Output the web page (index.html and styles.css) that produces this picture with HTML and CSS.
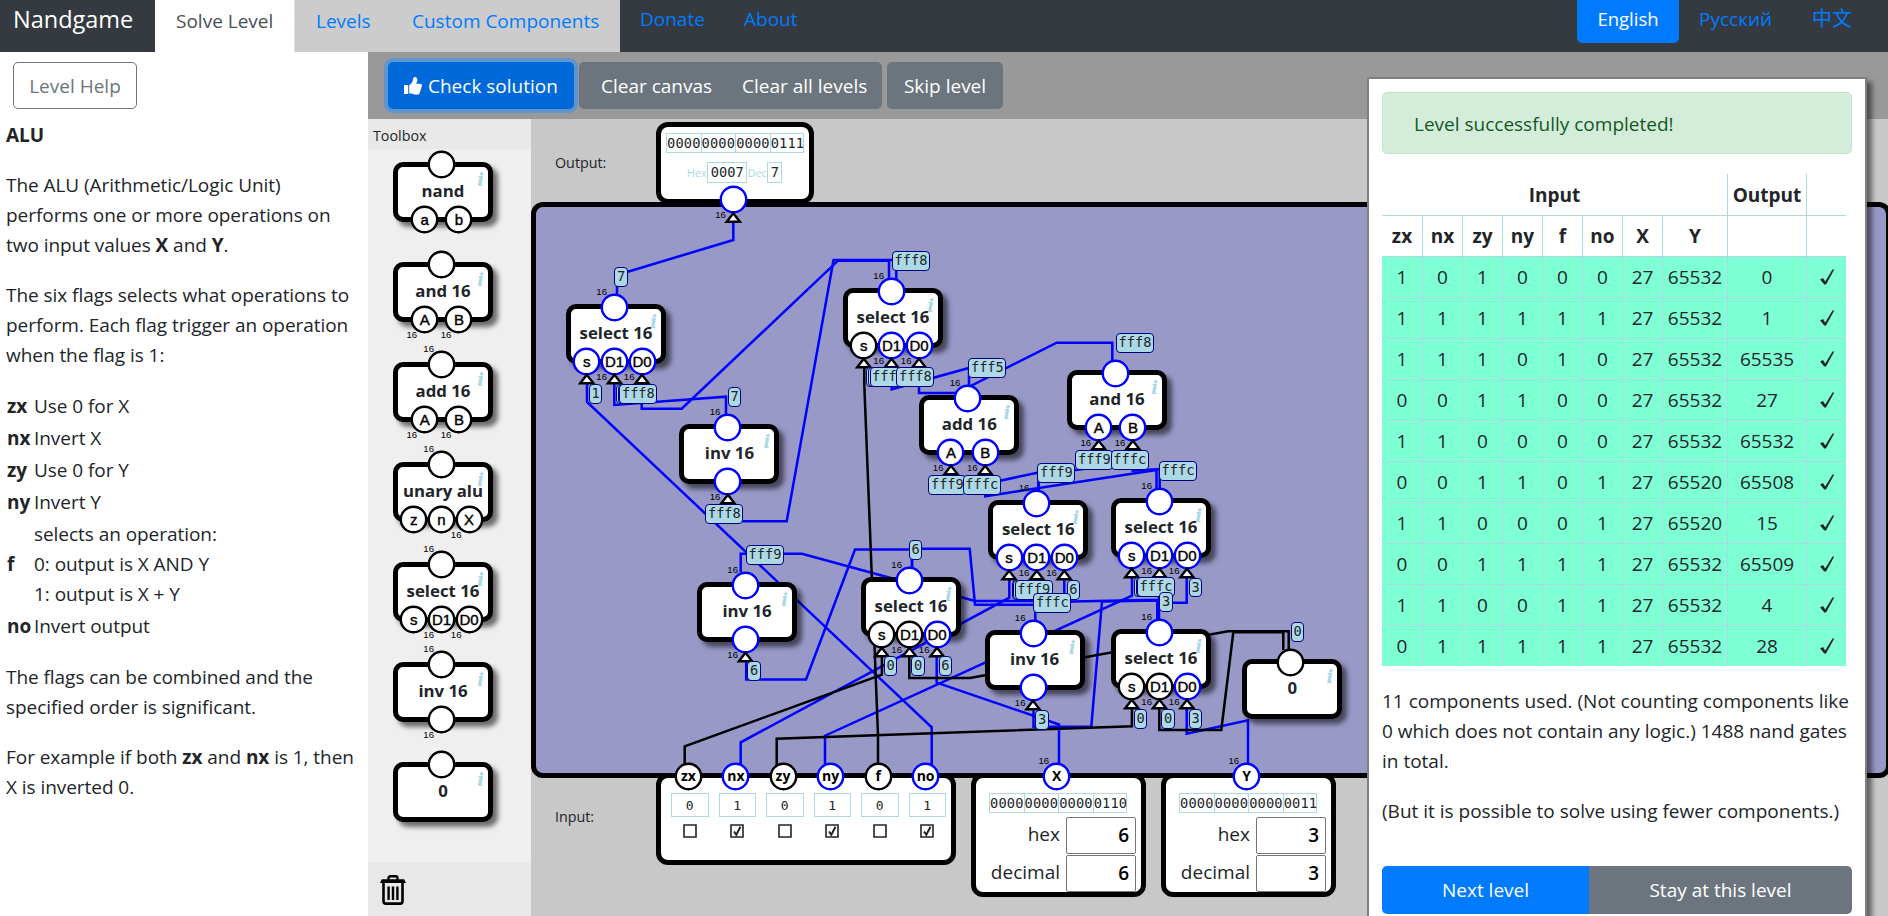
FILE: index.html
```html
<!DOCTYPE html>
<html lang="en">
<head>
<meta charset="utf-8">
<title>Nandgame</title>
<link rel="stylesheet" href="styles.css">
</head>
<body>
<header class="navbar">
  <a class="brand">Nandgame</a>
  <nav class="tabs">
    <a class="tab tab-active">Solve Level</a>
    <a class="tab">Levels</a>
    <a class="tab tab-wide">Custom Components</a>
  </nav>
  <a class="link link-donate">Donate</a>
  <a class="link link-about">About</a>
  <nav class="languages">
    <a class="lang lang-active">English</a>
    <a class="lang lang-ru">Русский</a>
    <a class="lang lang-zh">中文</a>
  </nav>
</header>

<div class="layout">
  <aside class="help">
    <button class="help-btn">Level Help</button>
    <h1>ALU</h1>
    <p>The ALU (Arithmetic/Logic Unit)<br>performs one or more operations on<br>two input values <b>X</b> and <b>Y</b>.</p>
    <p>The six flags selects what operations to<br>perform. Each flag trigger an operation<br>when the flag is 1:</p>
    <dl class="flags">
      <dt>zx</dt><dd>Use 0 for X</dd>
      <dt>nx</dt><dd>Invert X</dd>
      <dt>zy</dt><dd>Use 0 for Y</dd>
      <dt>ny</dt><dd>Invert Y</dd>
      <dt>f</dt><dd>selects an operation:<br>0: output is X AND Y<br>1: output is X + Y</dd>
      <dt>no</dt><dd>Invert output</dd>
    </dl>
    <p>The flags can be combined and the<br>specified order is significant.</p>
    <p>For example if both <b>zx</b> and <b>nx</b> is 1, then<br>X is inverted 0.</p>
  </aside>

  <main class="workspace">
    <div class="toolbar">
      <button class="btn btn-check">
        <svg class="thumb" viewBox="0 0 18 18"><path d="M0 8h4.2v9H0z"/><path d="M5.2 8.2C7.6 6.600 8.600 4.700 9 2.400 9.300.6 10 0 10.900 0c1.800 0 2.500 1.500 2.500 3.100 0 1.400-.8 2.300-1.200 3.700H16c1.200 0 2 .9 2 1.800 0 .8-.4 1.300-.8 1.600.3 1 0 2-.7 2.500.2 1-.1 1.800-.7 2.300.1 1.700-.9 2.700-3 2.700-3.400 0-4.400-1.400-7.600-1.500z"/></svg>
        <span>Check solution</span>
      </button>
      <div class="btn-group"><button class="btn">Clear canvas</button><button class="btn">Clear all levels</button></div>
      <button class="btn btn-skip">Skip level</button>
    </div>
    <div class="stage">
      <section class="toolbox">
        <h2>Toolbox</h2>
        <div class="tools" id="tools"></div>
        <footer class="trash">
          <svg viewBox="0 0 26 30"><g fill="none" stroke="#000"><path d="M8.500 5V3.200C8.500 2 9.200 1.300 10.400 1.300h5.200c1.200 0 1.900.7 1.900 1.900V5" stroke-width="2.400"/><path d="M3.500 8v18.200c0 1.500.9 2.400 2.400 2.400h14.200c1.500 0 2.400-.9 2.400-2.400V8" stroke-width="2.600"/><path d="M8.600 11.500V25M13 11.500V25M17.400 11.500V25" stroke-width="2.400"/></g><path d="M1.800 4.200h22.400L26 8H0z"/></svg>
        </footer>
      </section>
      <section class="canvas">
        <div class="plane">
          <span class="zone-label zone-output">Output:</span>
          <span class="zone-label zone-input">Input:</span>
          <div class="circuit"></div>
          <div class="card output-card">
            <div class="bits"><i>0000</i><i>0000</i><i>0000</i><i>0111</i></div>
            <div class="readout">Hex<code>0007</code>Dec<code>7</code></div>
          </div>
          <div class="card flags-card" id="flag-inputs"></div>
          <div class="card number-card card-x">
            <div class="bits"><i>0000</i><i>0000</i><i>0000</i><i>0110</i></div>
            <label>hex<span class="field">6</span></label>
            <label>decimal<span class="field">6</span></label>
          </div>
          <div class="card number-card card-y">
            <div class="bits"><i>0000</i><i>0000</i><i>0000</i><i>0011</i></div>
            <label>hex<span class="field">3</span></label>
            <label>decimal<span class="field">3</span></label>
          </div>
          <svg class="wires" id="wires" width="1888" height="916"></svg>
          <div id="nodes"></div>
          <svg class="wires" id="arrows" width="1888" height="916"></svg>
          <div id="tags"></div>
        </div>
      </section>
    </div>
  </main>
</div>

<section class="dialog">
  <div class="alert">Level successfully completed!</div>
  <table class="results">
    <colgroup><col class="c-first"><col class="c-bit"><col class="c-bit"><col class="c-bit"><col class="c-bit"><col class="c-bit"><col class="c-bit"><col class="c-y"><col class="c-out"><col class="c-ok"></colgroup>
    <thead>
      <tr><th colspan="8">Input</th><th>Output</th><th></th></tr>
      <tr><th>zx</th><th>nx</th><th>zy</th><th>ny</th><th>f</th><th>no</th><th>X</th><th>Y</th><th></th><th></th></tr>
    </thead>
    <tbody id="results"></tbody>
  </table>
  <p>11 components used. (Not counting components like<br>0 which does not contain any logic.) 1488 nand gates<br>in total.</p>
  <p>(But it is possible to solve using fewer components.)</p>
  <div class="actions"><button class="btn btn-next">Next level</button><button class="btn btn-stay">Stay at this level</button></div>
</section>
<script src="app.js"></script>
</body>
</html>
```

FILE: styles.css
```css
* { box-sizing: border-box; }
html { height: 100%; overflow: hidden; background: #fff; }
body {
  margin: 0;
  height: 916px;
  overflow: hidden;
  position: relative;
  display: flex;
  flex-direction: column;
  background: #fff;
  color: #212529;
  font: 19px/30px "Open Sans", "Noto Sans CJK SC", sans-serif;
}
button { font: inherit; padding: 0; margin: 0; }
p { margin: 0 0 20px; white-space: nowrap; }

/* navigation */
.navbar { display: flex; height: 52px; flex: none; background: #343a40; color: #007bff; overflow: hidden; }
.brand { width: 155px; padding: 4px 0 0 13px; color: #fff; font-size: 23.5px; }
.tabs { display: flex; width: 465px; background: #ccc; }
.tab { padding: 6px 0 0 21px; width: 95px; white-space: nowrap; }
.tab-active { width: 140px; background: #fff; color: #495057; border-right: 1px solid #dee2e6; }
.tab-wide { width: 230px; padding-left: 22px; }
.link { padding: 4px 0 0; }
.link-donate { margin-left: 20px; width: 104px; }
.languages { display: flex; margin-left: auto; padding-right: 36px; }
.lang { padding-top: 4px; }
.lang-active { width: 102px; height: 43px; text-align: center; background: #007bff; color: #fff; border-radius: 0 0 5px 5px; font-size: 18.5px; }
.lang-ru { margin-left: 20px; width: 113px; }
.lang-zh { width: 40px; font-size: 20px; }

.layout { display: flex; flex: 1; min-height: 0; }

/* level description */
.help { width: 368px; padding: 10px 0 0 6px; overflow: hidden; letter-spacing: -.05px; }
.help-btn { display: block; width: 124px; height: 47px; margin: 0 0 11px 7px; border: 1px solid #6c757d; border-radius: 5px; background: #fff; color: #6c757d; }
.help h1 { margin: 0 0 20px; font-size: 19px; line-height: 30px; }
.flags { display: grid; grid-template-columns: 27px 1fr; margin: 0 0 20px 1px; row-gap: 2px; align-items: center; padding: 1px 0; }
.flags dt { font-weight: 700; }
.flags dd { margin: 0; }

/* toolbar */
.workspace { flex: 1; display: flex; flex-direction: column; min-width: 0; }
.toolbar { display: flex; align-items: flex-start; height: 67px; flex: none; padding: 10px 0 0 20px; background: #999; }
.btn { height: 47px; border: 0; border-radius: 5px; background: #6c757d; color: #fff; white-space: nowrap; }
.btn-check { width: 186px; display: flex; align-items: center; gap: 6px; padding-left: 16px; background: #0069d9; box-shadow: 0 0 0 4px rgba(38,143,255,.5); }
.thumb { width: 18px; height: 18px; fill: #fff; }
.btn-group { display: flex; margin-left: 5px; width: 303px; background: #6c757d; border-radius: 5px; }
.btn-group .btn { background: none; padding-left: 22px; width: 141px; text-align: left; }
.btn-group .btn + .btn { width: 162px; }
.btn-skip { margin-left: 5px; width: 116px; }

.stage { flex: 1; display: flex; min-height: 0; }
.toolbox { width: 163px; display: flex; flex-direction: column; background: #efefef; }
.toolbox h2 { margin: 0; height: 30px; padding: 2px 0 0 5px; background: #e8e8e8; font-size: 14.3px; line-height: 30px; font-weight: 400; }
.tools { flex: 1; display: flex; flex-direction: column; gap: 40px; padding: 13px 0 0 25px; min-height: 0; overflow: hidden; }
.trash { height: 54px; padding: 13px 0 0 12px; background: #e8e8e8; }
.trash svg { width: 26px; height: 30px; display: block; }

/* circuit canvas, laid out in window coordinates */
.canvas { flex: 1; position: relative; overflow: hidden; background: #c8c8c8; }
.plane { position: absolute; left: -531px; top: -119px; width: 1900px; height: 916px; }
.zone-label { position: absolute; left: 555px; font-size: 14.3px; line-height: 20px; }
.zone-output { top: 153px; }
.zone-input { top: 807px; }
.circuit { position: absolute; left: 531px; top: 202px; width: 1360px; height: 576px; border: 5px solid #000; border-radius: 12px; background: #9999c8; }
.wires { position: absolute; left: 0; top: 0; fill: none; }

.card { position: absolute; border: 5px solid #000; border-radius: 12px; background: #fff; }
.output-card { left: 656px; top: 122px; width: 158px; height: 82px; padding: 6px 5px; }
.bits { display: flex; width: 138px; border: 1px solid #add8e6; font: 13.7px/18px "DejaVu Sans Mono", monospace; }
.bits i { flex: 1; font-style: normal; text-align: center; letter-spacing: .15px; }
.bits i + i { border-left: 1px solid #add8e6; }
.readout { display: flex; justify-content: center; margin-top: 9px; color: #add8e6; font-size: 10.8px; line-height: 21px; }
.readout code { border: 1px solid #add8e6; padding: 0 2.500px; margin: 0 .5px; color: #212529; font: 13.7px/18px "DejaVu Sans Mono", monospace; }
.flags-card { left: 656px; top: 773px; width: 300px; height: 92px; padding: 15px 5px 0 10px; display: flex; gap: 10px; }
.flag { width: 37.5px; display: flex; flex-direction: column; align-items: center; gap: 7px; }
.flag b { width: 37.5px; height: 24px; border: 1px solid #add8e6; text-align: center; font: 13px/23px "DejaVu Sans Mono", monospace; }
.flag svg { width: 14px; height: 14px; fill: none; stroke: #212529; }
.number-card { top: 773px; width: 175px; height: 124px; padding: 15px 5px 0 0; }
.number-card .bits { margin: 0 0 4px 13px; height: 20px; }
.number-card label { display: flex; justify-content: flex-end; gap: 6px; height: 38px; line-height: 35px; }
.field { width: 70px; height: 37px; border: 1.500px solid #767676; border-radius: 2px; padding-right: 6px; text-align: right; line-height: 35px; color: #000; font-weight: 600; background: #fff; }
.card-x { left: 971px; }
.card-y { left: 1161px; }

/* components */
.node { position: relative; flex: none; width: 100px; height: 60px; border: 5px solid #000; border-radius: 10px; background: #fff; box-shadow: 5px 5px 5px rgba(0,0,0,.55); }
#nodes .node { position: absolute; }
.node-name { position: absolute; left: 0; right: 0; top: 12px; text-align: center; font-size: 16.800px; line-height: 24px; font-weight: 700; white-space: nowrap; }
.node-info { position: absolute; right: 4px; top: 3px; color: #add8e6; font: italic 700 18px/20px "DejaVu Serif", serif; }
.port { position: absolute; width: 27px; height: 27px; margin: -13.5px 0 0 -13.5px; border: 2px solid #000; border-radius: 50%; background: #fff; color: #000; text-align: center; font: 15px/23px "Liberation Sans", sans-serif; -webkit-text-stroke: .4px #000; white-space: nowrap; box-shadow: 0 0 0 .4px #000; }
.port span { display: block; margin: 0 -5px; }
.port.on { border-color: #00f; box-shadow: 0 0 0 .4px #00f; }
.port.terminal { font: 700 14px/21px "Open Sans", sans-serif; -webkit-text-stroke: 0; }
.width { position: absolute; z-index: 1; width: 20px; margin: -9px 0 0 -27.5px; text-align: right; color: #000; font: 9.600px/11px "Liberation Sans", sans-serif; }
.tag { position: absolute; height: 19.500px; padding: 0 1.600px; border: 1px solid #000080; border-radius: 4px; background: #add8e6; color: #212529; font: 13.7px/17px "DejaVu Sans Mono", monospace; }

/* result dialog */
.dialog { position: absolute; left: 1367px; top: 77px; width: 500px; height: 860px; padding: 13px 13px 0; border: 2px solid #808080; background: #fff; box-shadow: 5px 5px 5px rgba(0,0,0,.5); }
.alert { height: 62px; margin-bottom: 20px; padding: 16px 31px; border: 1px solid #c3e6cb; border-radius: 5px; background: #d4edda; color: #155724; }
.results { table-layout: fixed; width: 464px; border-collapse: collapse; margin-bottom: 20px; text-align: center; }
.c-first { width: 40.500px; }
.c-bit { width: 40px; }
.c-y { width: 65px; }
.c-out { width: 79px; }
.c-ok { width: 39.500px; }
.results th, .results td { height: 41px; padding: 0; border: 1px solid #add8e6; }
.results tr:first-child th { border-top: 0; }
.results thead tr:first-child th { padding-top: 2px; }
.results tr > :first-child { border-left: 0; }
.results tr > :last-child { border-right: 0; }
.results tbody tr:last-child td { border-bottom: 0; }
.results tbody { background: #7fffd4; }
.tick { width: 16px; height: 18px; display: block; margin: 0 auto; fill: #212529; }
.actions { display: flex; margin-top: 40px; }
.actions .btn { height: 48px; }
.actions .btn-next { width: 207px; background: #007bff; border-radius: 5px 0 0 5px; }
.actions .btn-stay { width: 263px; border-radius: 0 5px 5px 0; }
```

FILE: app.js
```js
// Port offsets from the component's outer corner
const LAYOUTS = { 0: [], 1: [48.5], 2: [31.7, 65.9], 3: [20.8, 48.5, 76] };
const arrowTips = [];

function port(x, y, label, on, extra = '') {
  return `<div class="port ${on ? 'on' : ''} ${extra}" style="left:${x}px;top:${y}px"><span>${label}</span></div>`;
}
function widthMark(x, baseline) {
  return `<span class="width" style="left:${x}px;top:${baseline}px">16</span>`;
}

// wide: which inputs carry 16 bits; on: lit state of [output, ...inputs]
function node({ name, pins = [], wide = [], top = true, on = [], x, y }) {
  const placed = x !== undefined;
  const xs = LAYOUTS[pins.length];
  let html = placed ? `<div class="node" style="left:${x}px;top:${y}px">` : '<div class="node">';
  html += `<span class="node-info">i</span><span class="node-name">${name}</span>`;
  const topY = placed ? -1.7 : -2.5;
  if (top) html += widthMark(43.5, topY - 12.3);
  html += port(43.5, topY, '', on[0]);
  pins.forEach((p, i) => {
    const px = xs[i] - 5;
    if (wide[i]) html += widthMark(px, 52.7 + 18.3);
    html += port(px, 52.7, p, on[i + 1]);
    if (placed) arrowTips.push([x + xs[i], y + 69]);
  });
  return html + '</div>';
}

const SEL = { name: 'select 16', pins: ['s', 'D1', 'D0'], wide: [0, 1, 1] };
const INV = { name: 'inv 16', pins: [''], wide: [1] };
const AND = { name: 'and 16', pins: ['A', 'B'], wide: [1, 1] };
const ADD = { name: 'add 16', pins: ['A', 'B'], wide: [1, 1] };
const ZERO = { name: '0', top: false };

document.getElementById('tools').innerHTML = [
  { name: 'nand', pins: ['a', 'b'], top: false },
  { ...AND, top: false },
  ADD,
  { name: 'unary alu', pins: ['z', 'n', 'X'], wide: [0, 0, 1] },
  SEL, INV, ZERO
].map(node).join('');

let nodes = [
  { ...SEL, x: 566, y: 304, on: [1, 1, 1, 1] },
  { ...INV, x: 679.4, y: 424, on: [1, 1] },
  { ...SEL, x: 843, y: 288, on: [1, 0, 1, 1] },
  { ...ADD, x: 919.3, y: 395, on: [1, 1, 1] },
  { ...AND, x: 1067, y: 370, on: [1, 1, 1], top: false },
  { ...SEL, x: 988.3, y: 500, on: [1, 1, 1, 1] },
  { ...SEL, x: 1111, y: 498, on: [1, 1, 1, 1] },
  { ...SEL, x: 1111, y: 629, on: [1, 0, 0, 1] },
  { ...INV, x: 984.5, y: 630, on: [1, 1] },
  { ...ZERO, x: 1242.3, y: 659, on: [0] },
  { ...INV, x: 697, y: 582, on: [1, 1] },
  { ...SEL, x: 861, y: 577, on: [1, 0, 0, 1] }
].map(node).join('');

// Terminals on the circuit's edges
nodes += port(733.3, 199.5, '', 1) + widthMark(733.3, 218);
arrowTips.push([733.3, 211.5]);
[[688.4, 'zx', 0], [735.9, 'nx', 1], [783, 'zy', 0], [830.6, 'ny', 1], [878.3, 'f', 0], [925.6, 'no', 1]]
  .forEach(([x, l, on]) => { nodes += port(x, 776.7, l, on, 'terminal'); });
[[1056.7, 'X'], [1246.6, 'Y']]
  .forEach(([x, l]) => { nodes += widthMark(x, 763.7) + port(x, 776.7, l, 1, 'terminal'); });
document.getElementById('nodes').innerHTML = nodes;

const BLUE = [
  '733.3,222 733.3,240 617,275 617,295',
  '587,384 587,402 931.7,727.3 931.7,765',
  '614.3,384 614.3,405 726,396.7 726,415',
  '641.7,384 641.7,408.7 681.7,408.7 838,260.7 889,260.7 889,280',
  '728,504 728,521.3 786.7,521.3 833.5,260 896.3,260 896.3,280',
  '891.7,368 891.7,389.3 969,368 969,386',
  '919,368 919,393 956.7,393 1056.7,342.7 1112.3,342.7 1112.3,362',
  '950.7,476 950.7,491.5 1038.3,472.5 1038.3,492',
  '1098.3,450 1098.3,467 1038.7,475 1038.7,492',
  '985.3,476 985.3,496.300 1156.500,470 1156.500,490',
  '1132.7,450 1132.7,470.7 1159.7,469 1159.7,490',
  '740.7,572 740.7,553.7 802,553.7 975,601 1042.3,601 1042.3,585',
  '746.2,662 746.2,679.5 806,679.5 855,549.5 912,549.5 912,567',
  '912,567 912,548.7 969.7,548.7 975,604.7 1064.3,604.7 1064.3,580',
  '1035.3,620 1035.3,602.3 1159,599.700 1159,585',
  '1033.5,705 1033.5,726.7 1091.3,726.7 1102,601.5 1157.3,600.5 1157.3,621',
  '1159,621 1159,602.7 1186.7,602.7 1186.7,575',
  '1186.7,705 1186.7,733.7 1248,720.3 1248,765',
  '740.7,765 740.7,742.3 1009.3,597.7 1009.3,580',
  '825,765 825,735.7 1132,595.7 1132,577',
  '936.7,655 936.7,682.7 1059,724.5 1059,765'
];
const BLACK = [
  '864.3,368 864.3,385 878,735 878,765',
  '1288.7,652 1288.7,631.3 1228,631.3 970,678 909.3,678 909.3,655',
  '1159.3,705 1159.3,730 1221.3,730 1233.3,632.3 1283.3,632.3 1283.3,650',
  '1131.9,705 1131.9,726.3 776.7,738.7 776.7,765',
  '881.9,655 881.9,674.7 684.7,746.3 684.7,765'
];
const lines = (list, color) =>
  list.map(p => `<polyline points="${p}" stroke="${color}" stroke-width="2.500"/>`).join('');
document.getElementById('wires').innerHTML = lines(BLUE, '#00f') + lines(BLACK, '#000');
document.getElementById('arrows').innerHTML = arrowTips
  .map(([x, y]) => `<path d="M${x} ${y + 1.8}L${x + 6.6} ${y + 10.2}H${x - 6.6}Z" fill="#fff" stroke="#000" stroke-width="2.400"/>`)
  .join('');

const TAGS = [
  ['7', 614.3, 267.3], ['fff8', 892, 251], ['7', 728, 387], ['1', 589, 384.3],
  ['7', 616, 384.3], ['fff8', 618, 384.3], ['fff8', 619.3, 384.3], ['fff8', 705.3, 504],
  ['0', 866, 367.3], ['fff5', 868, 367.3], ['fff8', 869.5, 367.3], ['fff8', 896.3, 367.3],
  ['fff5', 968.3, 358], ['fff8', 1116, 333.3],
  ['fff9', 928.3, 475.3], ['fffc', 962.7, 475.3], ['fff9', 1075.3, 450], ['fffc', 1110.7, 450],
  ['fff9', 1037.3, 463.3], ['fffc', 1159, 461.3], ['fff9', 746, 545.3],
  ['6', 909, 540.3], ['6', 747.3, 661.3],
  ['0', 884, 656.3], ['0', 911.3, 656.3], ['6', 938.7, 656.3],
  ['1', 1011.5, 580.3], ['6', 1013.3, 580.3], ['fff9', 1014.7, 580.3], ['6', 1066.7, 580.3],
  ['fffc', 1033.3, 593.3], ['3', 1035.3, 710],
  ['1', 1134, 577.3], ['3', 1135.5, 577.3], ['fffc', 1137, 577.3], ['3', 1189, 577.7], ['3', 1159.3, 592.3],
  ['0', 1134, 709], ['0', 1161.3, 709], ['3', 1189, 709], ['0', 1291, 622.3]
];
document.getElementById('tags').innerHTML = TAGS
  .map(([t, x, y]) => `<span class="tag" style="left:${x}px;top:${y}px">${t}</span>`).join('');

document.getElementById('flag-inputs').innerHTML = [0, 1, 0, 1, 0, 1]
  .map(v => `<div class="flag"><b>${v}</b><svg viewBox="0 0 14 14"><path d="M1 1h12v12H1z" stroke-width="1.600"/>${v ? '<path d="M4 7.500l2.300 3.300L10.500 2.800" stroke-width="2"/>' : ''}</svg></div>`)
  .join('');

const RESULTS = [
  [1, 0, 1, 0, 0, 0, 27, 65532, 0], [1, 1, 1, 1, 1, 1, 27, 65532, 1],
  [1, 1, 1, 0, 1, 0, 27, 65532, 65535], [0, 0, 1, 1, 0, 0, 27, 65532, 27],
  [1, 1, 0, 0, 0, 0, 27, 65532, 65532], [0, 0, 1, 1, 0, 1, 27, 65520, 65508],
  [1, 1, 0, 0, 0, 1, 27, 65520, 15], [0, 0, 1, 1, 1, 1, 27, 65532, 65509],
  [1, 1, 0, 0, 1, 1, 27, 65532, 4], [0, 1, 1, 1, 1, 1, 27, 65532, 28]
];
const TICK = '<svg class="tick" viewBox="0 0 16 18"><path d="M1 11.500L4 10l2.200 3.600L13.500 1.500h1.800L7 16.500H5.300z"/></svg>';
document.getElementById('results').innerHTML = RESULTS
  .map(r => `<tr>${r.map(v => `<td>${v}</td>`).join('')}<td>${TICK}</td></tr>`).join('');
```
